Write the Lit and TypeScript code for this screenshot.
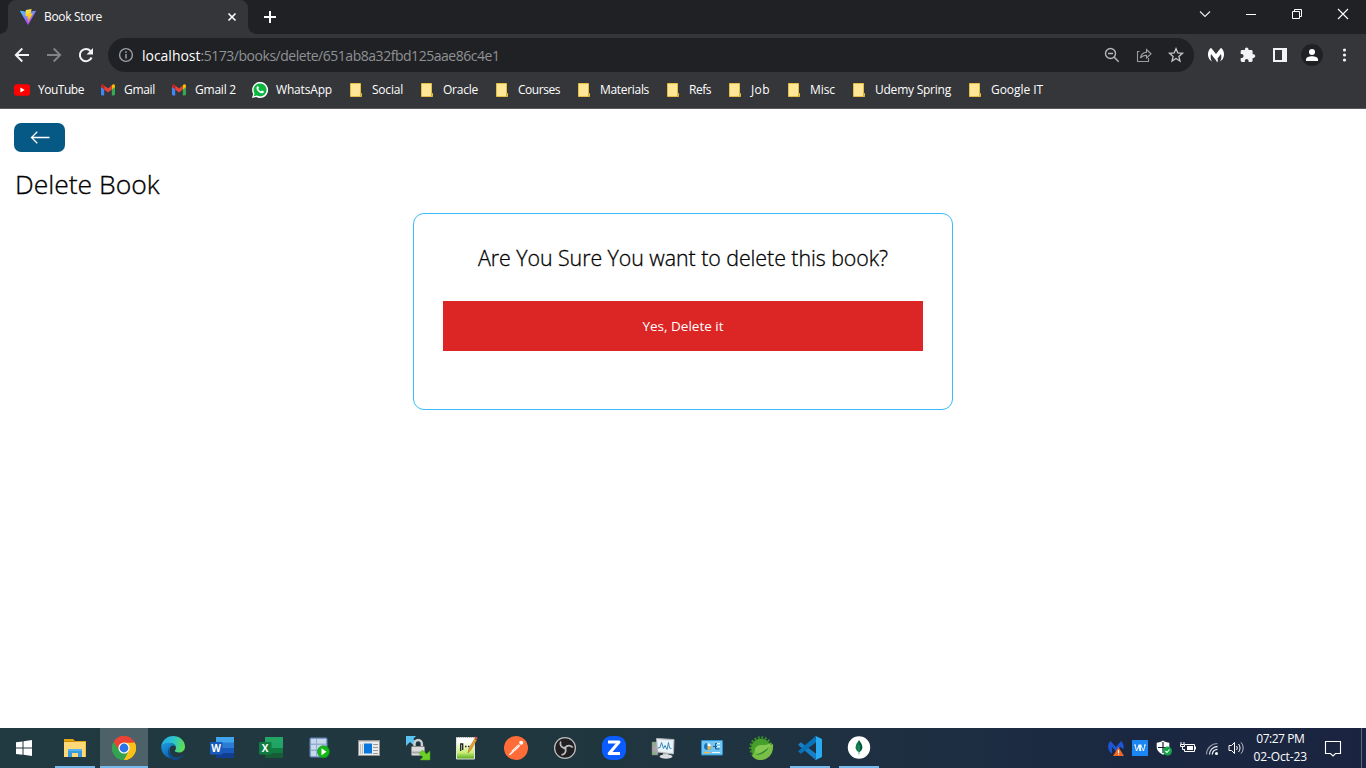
import { LitElement, html, svg, css } from "lit";
import { customElement, property } from "lit/decorators.js";
import { classMap } from "lit/directives/class-map.js";

/** A single line of text tracked so that it fills a given width. */
@customElement("fit-text")
class FitText extends LitElement {
  @property({ type: Number }) w = 0;
  @property() text = "";
  static styles = css`
    :host { display: block; flex: none; white-space: pre; }
    .line { display: inline-block; white-space: pre; }
  `;
  updated() {
    const el = this.renderRoot.querySelector(".line") as HTMLElement;
    el.style.letterSpacing = "0px";
    const natural = el.getBoundingClientRect().width;
    el.style.letterSpacing = `${(this.w - natural) / this.text.length}px`;
  }
  render() {
    return html`<span class="line">${this.text}</span>`;
  }
}

const fit = (text: string, w: number) => html`<fit-text style="width:${w}px" .w=${w} .text=${text}></fit-text>`;

const icon = (w: number, h: number, body: unknown, vb = `0 0 ${w} ${h}`) =>
  html`<svg width=${w} height=${h} viewBox=${vb} fill="none">${body}</svg>`;

const vite = svg`
  <defs>
    <linearGradient id="va" x1="0" y1="0" x2=".6" y2="1"><stop stop-color="#41d1ff"/><stop offset="1" stop-color="#bd34fe"/></linearGradient>
    <linearGradient id="vb" x1=".4" y1="0" x2=".6" y2="1"><stop stop-color="#ffea83"/><stop offset=".2" stop-color="#ffdd35"/><stop offset="1" stop-color="#ffa800"/></linearGradient>
  </defs>
  <path fill="url(#va)" d="M15.9 2.3 8.4 15.6a.4.4 0 0 1-.7 0L.1 2.3c-.2-.3.1-.7.4-.6L8 3l7.500-1.300c.3-.1.600.3.400.6Z"/>
  <path fill="url(#vb)" d="M11.500 0 6 1.100c-.1 0-.2.1-.2.200l-.3 5.700c0 .2.1.3.3.2l1.500-.3c.2 0 .3.1.3.3l-.5 2.200c0 .2.1.3.3.2l1-.3c.1 0 .3.1.2.3L7.900 13c0 .3.300.4.400.2L12.600 4.700c.1-.2 0-.3-.2-.3l-1.600.3c-.200 0-.300-.100-.300-.300l1.100-4c0-.200-.100-.300-.100-.400Z"/>`;

const youtube = svg`<rect y="2.300" width="16" height="11.400" rx="2.800" fill="#f00"/><path d="m6.400 5.600 4.300 2.400-4.300 2.400Z" fill="#fff"/>`;
const gmail = svg`
  <path d="M1 4v8.300c0 .7.500 1.200 1.200 1.200H4.200V6.200Z" fill="#4285f4"/>
  <path d="M15 4v8.300c0 .7-.5 1.200-1.200 1.200H11.800V6.200Z" fill="#34a853"/>
  <path d="M11.800 3.500v4l3.200-2.400V3.900c0-1.300-1.500-2-2.500-1.200Z" fill="#fbbc04"/>
  <path d="M4.200 7.500v-4L8 6.400l3.800-2.900v4L8 10.400Z" fill="#ea4335"/>
  <path d="M1 3.900v1.200l3.200 2.400v-4l-.7-.8C2.500 1.900 1 2.600 1 3.900Z" fill="#c5221f"/>`;
const whatsapp = svg`
  <path d="M0 16 1.200 12A8 8 0 1 1 4.300 15Z" fill="#fff"/>
  <path d="m1.700 14.300.9-2.900A6.500 6.500 0 1 1 4.800 13.500Z" fill="#0bb540"/>
  <path d="M5.500 4.200c.6-.2.800 0 1 .6l.4 1c.1.400-.3.700-.6 1.100.7 1.300 1.500 2 2.700 2.500.5-.5.8-1 1.100-.9l1.600.8c.3.200.1 1-.2 1.400-.7.800-1.800.8-3.200.2C6.200 9.900 5 8.300 4.600 7c-.3-1 0-2.300.9-2.800Z" fill="#fff"/>`;
const folder = svg`<path d="M2.500 1.500h10v10h1v3h-11Z" fill="#ffe797" stroke="#e3bd46"/><path d="M12.500 11v3.500" stroke="#d6ad37"/>`;

const bookmarks: [string, number, unknown][] = [
  ["YouTube", 46, youtube], ["Gmail", 31, gmail], ["Gmail 2", 41, gmail], ["WhatsApp", 56, whatsapp],
  ["Social", 31, folder], ["Oracle", 35, folder], ["Courses", 42, folder], ["Materials", 49, folder],
  ["Refs", 22, folder], ["Job", 19, folder], ["Misc", 25, folder], ["Udemy Spring", 76, folder], ["Google IT", 52, folder],
];

const explorer = svg`
  <path d="M1 3h9l2 2h11v16H1Z" fill="#e5a50c"/><path d="M1 6h21.500v15H1Z" fill="#ffd978"/><path d="M1 5h10l2 1H1Z" fill="#c98a06"/>
  <path d="M5 13h14v8h-4v-4H9v4H5Z" fill="#3a9ae0"/><path d="M5 13h14v2H5Z" fill="#54b2f1"/>`;
const chrome = svg`
  <path d="M12 12 1.600 6A12 12 0 0 1 22.400 6Z" fill="#ea4335"/>
  <path d="M12 12 22.400 6A12 12 0 0 1 12 24Z" fill="#fbc116"/>
  <path d="M12 12V24A12 12 0 0 1 1.600 6Z" fill="#34a350"/>
  <path d="M12 6.500H22.650A12 12 0 0 1 12 24L16.800 14.800Z" fill="#fbc116"/>
  <path d="M1.600 6 7.200 14.800 12 12V6.500H22.600A12 12 0 0 0 1.600 6Z" fill="#ea4335"/>
  <path d="M1.600 6 7.200 14.800A5.500 5.500 0 0 0 16.800 14.800L12 24A12 12 0 0 1 1.600 6Z" fill="#34a350"/>
  <circle cx="12" cy="12" r="5.600" fill="#fff"/><circle cx="12" cy="12" r="4.400" fill="#2a75e9"/>`;
const edge = svg`
  <defs>
    <linearGradient id="ea" x1="0" y1=".3" x2="1" y2=".5"><stop stop-color="#26a9e6"/><stop offset=".5" stop-color="#2cc6cd"/><stop offset="1" stop-color="#62df4b"/></linearGradient>
    <linearGradient id="eb" x1="0" y1="0" x2=".6" y2="1"><stop stop-color="#1b9fe2"/><stop offset="1" stop-color="#0c59a4"/></linearGradient>
  </defs>
  <path d="M.2 10.500C1 4.500 6 0 12 0c7 0 12 5 12 10.500 0 4-3 6-6 6-2.500 0-4.300-.8-4.300-1.700 0-.6 1.300-1 1.300-2.900 0-3-3-4.900-6.200-4.900-4 0-7 1.500-8.600 3.500Z" fill="url(#ea)"/>
  <path d="M.2 10.500C1.800 8 5 6.500 8.800 6.800c3.500.200 6 2.200 6.200 4.700-.5-1.400-2-2.500-3.700-1.900-2 .6-3 2.800-2.700 5.400.600 4.700 4.700 7.800 9.100 6.500A12 12 0 0 1 .2 10.500Z" fill="url(#eb)"/>
  <path d="M9.700 10.600C7 13 7.800 18.500 11.900 20.800c3 1.600 6.700.7 9.800-1.800.7-.5 1 .1.600.6A12 12 0 0 1 13 24C7.500 23 4.500 14.500 9.700 10.600Z" fill="#114a8b"/>`;
const office = (letter: string, tones: string[]) => svg`
  <rect x="6" y="1" width="18" height="6" fill=${tones[0]}/><rect x="6" y="6.500" width="18" height="5.500" fill=${tones[1]}/>
  <rect x="6" y="12" width="18" height="5" fill=${tones[2]}/><rect x="6" y="17" width="18" height="5" fill=${tones[3]}/>
  <rect y="6" width="12.500" height="12.500" rx=".8" fill=${tones[4]}/>
  <text x="6.200" y="15.800" text-anchor="middle" font-family="Open Sans, sans-serif" font-weight="700" font-size="10" fill="#fff">${letter}</text>`;
const server = svg`
  <rect x="2" y="2" width="17" height="19" rx="1" fill="#93aed1" stroke="#6488b8"/>
  <g fill="#c7d7ec"><path d="M3 3h5v4.500H3zM9 3h9v4.500H9zM3 9h5v4.500H3zM9 9h9v4.500H9zM3 15h5v5H3zM9 15h9v5H9z"/></g>
  <circle cx="15.500" cy="15.700" r="6" fill="#14b817" stroke="#0b8e10" stroke-width=".7"/><path d="m13.500 12.200 5 3.500-5 3.500Z" fill="#fff"/>`;
const win = svg`
  <rect x="1.500" y="4.500" width="21" height="15" fill="#ececec" stroke="#929292"/><path d="M2 5.500h20" stroke="#c7c7c7"/>
  <rect x="7" y="7.500" width="8" height="10" fill="#0878df"/><path d="M3.500 8v10M5.500 8v10" stroke="#bdbdbd"/>
  <path d="M16 8.500h5M16 11.500h5M16 14.500h5M16 17.500h5" stroke="#999"/>`;
const lock = svg`
  <path d="M0 0h10L7.300 3l3 3-3 3-3.300-3-4 4Z" fill="#5ac3ef"/>
  <path d="M8.500 12V8a3.700 4 0 0 1 7.400 0v4" stroke="#cfcfcf" stroke-width="2.400"/>
  <rect x="5.500" y="10.500" width="13" height="9" rx="1" fill="#dcdcdc" stroke="#8d8d8d"/><path d="M6 16.500h12" stroke="#a6a6a6" stroke-width="2"/>
  <path d="M24 24H14l3-3-4-3.500 3.500-3.500 4 4 3.500-3Z" fill="#6bd126" stroke="#4aa015" stroke-width=".5"/>`;
const notepad = svg`
  <defs><linearGradient id="np" x1="0" y1="0" x2="0" y2="1"><stop offset=".2" stop-color="#fff"/><stop offset=".7" stop-color="#c8ef77"/><stop offset="1" stop-color="#53a91c"/></linearGradient></defs>
  <path d="M1.500 1.500H19.500V23H1.500Z" fill="url(#np)" stroke="#e0e3dc"/><path d="M2 1.500h17" stroke="#aaa" stroke-dasharray="1 1"/>
  <path d="M5.700 15V8h2v6M10 10.500h1.500m1.500 0h1.500" stroke="#222" stroke-width="1.300"/>
  <path d="m13 17 .8-4L19.500 3l2 1.200-6 10.300Z" fill="#e9a433" stroke="#b26f1c" stroke-width=".6"/><path d="m19.500 2.500 1.200-2 2 1.200-1.100 2Z" fill="#e1584d"/>`;
const postman = svg`
  <circle cx="12" cy="12" r="12" fill="#ff6c37"/><path d="m10 12.500 4.500-4.200 1.800 1.500-4.800 4.700-2.500 1-1.500-.5Z" fill="#fff"/><circle cx="17.200" cy="6.800" r="2" fill="#fff"/>
  <path d="m5 19 4.500-5M6.300 18.700l4-3.700" stroke="#fff" stroke-width="1"/><path d="m9.500 14.500 5.500-5.500" stroke="#f6a183" stroke-width=".6"/>`;
const obs = svg`
  <circle cx="12" cy="12" r="10.400" fill="#211f22" stroke="#bababc" stroke-width="1.300"/>
  <g stroke="#bebebe" stroke-width="1.700"><path d="M11.500 12.200C8 11.500 6.500 8.500 7.800 5.500"/><path d="M11.500 12.200C8 11.500 6.500 8.500 7.800 5.500" transform="rotate(120 12 12)"/><path d="M11.500 12.200C8 11.500 6.500 8.500 7.800 5.500" transform="rotate(240 12 12)"/></g><circle cx="12" cy="12" r="1.500" fill="#bbb"/>`;
const zbox = svg`<rect width="24" height="24" rx="9" fill="#0b5cff"/><path d="M6 6h11L7.200 17.500H18" stroke="#fff" stroke-width="3" stroke-linejoin="round"/>`;
const monitor = svg`
  <path d="M1 6h6v13H1Z" fill="#a5a5a5" stroke="#777" stroke-width=".6"/><path d="M2 8h3M2 17h3" stroke="#5c5"/>
  <path d="M12 16h5v4h-5z" fill="#aaa"/><ellipse cx="15" cy="20.500" rx="6.500" ry="2.200" fill="#d9dde0"/>
  <path d="m5.500 2.500 17.500 1-.5 14.500-16-2Z" fill="#e8edf0" stroke="#aeb5b9"/><path d="m7 4.500 14.500 1-.5 10.500-13.500-1.700Z" fill="#e9f5fc"/>
  <path d="m7 12 2-.5 1.500-5 2 6 1.500-3 2 4 1.500-7 1 5.500 2 .5" stroke="#3c88b5"/>`;
const panel = svg`
  <rect x="1.500" y="4.500" width="21" height="14.500" rx=".5" fill="#71c6f4" stroke="#2d91cf"/><circle cx="7.500" cy="10.500" r="3.500" fill="#1476bd"/>
  <path d="M7.500 10.500V7a3.500 3.500 0 0 1 3.500 3.500Z" fill="#fff"/><path d="M7.500 10.500H11A3.500 3.500 0 0 1 7.500 14Z" fill="#ffaf32"/>
  <path d="M13 10.500h2.500M15.500 13V7.500h4M15.500 10.500h4M15.500 13h4" stroke="#205c87"/><path d="M17 7h3v1.300h-3zM17 10h3v1.300h-3z" fill="#eaf8ff"/><path d="M4 16.500h6" stroke="#ffb43e" stroke-width="1.200"/><path d="M12 16.500h8" stroke="#eef8fc"/>`;
const spring = svg`
  <circle cx="12" cy="12.500" r="10" fill="#459f2b"/><circle cx="12" cy="12" r="10.700" stroke="#3b9127" stroke-width="2.200" stroke-dasharray="2 1.600"/>
  <path d="M24 8c1 10-5 16-13 16-4 0-6-2-8-4 2-1 3-9 8-10 5-.6 9-.4 13-2Z" fill="#78bd45"/>
  <path d="M21.500 7c.5 7-4 11-10 10.500-2.300-.2-4.500-.5-5.500-2C5 11 9 9 13 9c3.500 0 6-.2 8.500-2Z" fill="#85c850"/><path d="M6 19c7 0 12-3 14-8-3 3-6 5-14 8Z" fill="#2c8b2f"/>`;
const vscode = svg`
  <path d="m.8 8 2-1.700L18.500 18l-1 5.700L.5 9.300C0 8.900.2 8.500.8 8Z" fill="#167fc5"/>
  <path d="m.8 16 2 1.700L18.500 6l-1-5.700L.5 14.700c-.5.400-.3.800.3 1.300Z" fill="#0873b9"/>
  <path d="M17.800 0 24 3v18l-6.200 3c-.5.100-.9 0-1.300-.4.800.3 1.500-.2 1.500-1.100v-21c0-.9-.7-1.400-1.500-1.100.4-.4.8-.5 1.300-.4Z" fill="#2aaaf0"/>`;
const mongo = svg`<circle cx="12" cy="11.500" r="11.200" fill="#fff"/><path d="M12 4c-2 2.500-3.500 5-3.400 7.500.1 2.200 1.700 4 3.400 5Z" fill="#087a4c"/><path d="M12 4c2 2.500 3.500 5 3.400 7.500-.1 2.200-1.700 4-3.400 5Z" fill="#035c42"/><path d="M12 9v9.500" stroke="#42a875" stroke-width=".8"/>`;

const word = office("W", ["#41a5ee", "#2b7cd3", "#185abd", "#103f91", "#185abd"]);
const excel = office("X", ["#23a566", "#21a366", "#107c41", "#185c37", "#107c41"]);

const tasks: { art: unknown; state?: string }[] = [
  { art: explorer, state: "open" }, { art: chrome, state: "active" }, { art: edge }, { art: word }, { art: excel },
  { art: server }, { art: win }, { art: lock }, { art: notepad }, { art: postman }, { art: obs }, { art: zbox },
  { art: monitor }, { art: panel }, { art: spring }, { art: vscode, state: "open" }, { art: mongo, state: "open" },
];

@customElement("app-root")
class AppRoot extends LitElement {
  static styles = css`
    :host { display: flex; flex-direction: column; width: 1366px; height: 768px; overflow: hidden; background: #fff; font-family: "Open Sans", "Noto Sans", sans-serif; font-size: 12px; line-height: 16px; }
    * { box-sizing: border-box; }
    svg { display: block; flex: none; overflow: visible; }

    .strip { display: flex; height: 34px; background: #202124; color: #fff; flex: none; }
    .tab { display: flex; align-items: center; width: 240px; height: 34px; padding: 0 12px; background: #35363a; border-radius: 8px 8px 0 0; }
    .tab fit-text { margin: 0 auto 0 8px; }
    .flare { width: 8px; height: 34px; background: radial-gradient(circle at 8px 0, transparent 7.5px, #35363a 8px) no-repeat 0 26px / 8px 8px; }
    .flare.left { background: radial-gradient(circle at 0 0, transparent 7.5px, #35363a 8px) no-repeat 0 26px / 8px 8px; }
    .plus { padding: 11px 0 0 8px; }
    .winbtns { display: flex; margin-left: auto; padding-right: 17px; gap: 34px; align-items: center; height: 28px; }

    .toolbar { display: flex; align-items: center; height: 38px; flex: none; background: #35363a; padding: 4px 14px 0 14px; }
    .nav { display: flex; gap: 16px; width: 94px; }
    .omnibox { display: flex; align-items: center; width: 1086px; height: 34px; border-radius: 17px; background: #202124; padding: 0 10px; font-size: 14px; line-height: 20px; }
    .host { color: #fff; margin: 1px 0 0 8px; }
    .url { color: #8f9194; margin-top: 1px; }
    .actions { display: flex; gap: 16px; margin-left: auto; }
    .exts { display: flex; gap: 16px; margin-left: 14px; align-items: center; }
    .avatar { display: grid; place-items: center; width: 22px; height: 22px; margin: 0 -3px; border-radius: 50%; background: #202124; }

    .bookmarks { display: flex; align-items: center; gap: 16px; height: 37px; flex: none; padding: 0 14px; background: #35363a; border-bottom: 1px solid #5c5759; color: #fff; }
    .bm { display: flex; align-items: center; gap: 8px; }

    .page { flex: 1; display: flex; flex-direction: column; padding: 14px 14px 0; color: #000; }
    .back { display: grid; place-items: center; width: 51px; height: 29px; padding-bottom: 1px; border-radius: 7px; background: #075985; }
    .title { font-size: 26.5px; line-height: 32px; font-weight: 300; -webkit-text-stroke: .35px #000; margin: 16px 0 13px 1px; }
    .card { display: flex; flex-direction: column; align-items: center; align-self: center; width: 540px; height: 197px; border: 1px solid #38bdf8; border-radius: 11px; padding: 28px 29px 0; }
    .ask { font-size: 21.4px; line-height: 32px; font-weight: 300; -webkit-text-stroke: .3px #000; }
    .confirm { display: grid; place-items: center; width: 480px; height: 50px; margin-top: 27px; background: #dc2626; color: #fff; font-size: 13.5px; line-height: 20px; }

    .taskbar { display: flex; height: 40px; flex: none; background: linear-gradient(90deg, #213940, #20363f 45%, #1e3042 63%, #1b2841 82%, #1a2440); color: #fff; }
    .start { width: 51px; padding: 12px 0 0 16px; }
    .apps { display: flex; gap: 1px; }
    .task { display: flex; flex-direction: column; align-items: center; justify-content: space-between; width: 48px; height: 40px; padding-top: 8px; }
    .task.active { background: #4c6168; }
    .bar { width: 40px; height: 2px; }
    .open .bar, .active .bar { background: #76b9ed; }
    .active .bar { width: 48px; }
    .tray { display: flex; align-items: center; margin-left: auto; gap: 8px; }
    .clock { display: flex; flex-direction: column; align-items: center; line-height: 18px; margin: 0 9px 1px -1px; }
    .desk { width: 5px; height: 40px; border-left: 1px solid #5d657a; margin-left: 11px; }
  `;

  render() {
    return html`
      <div class="strip">
        <div class="flare left"></div>
        <div class="tab">${icon(16, 16, vite)}${fit("Book Store", 58)}
          ${icon(8, 8, svg`<path d="m.5.5 7 7m0-7-7 7" stroke="#fff" stroke-width="1.600"/>`)}</div>
        <div class="flare"></div>
        <div class="plus">${icon(12, 12, svg`<path d="M6 0v12M0 6h12" stroke="#fff" stroke-width="2"/>`)}</div>
        <div class="winbtns">
          ${icon(12, 12, svg`<path d="m1 3.500 5 5 5-5" stroke="#eee" stroke-width="1.100"/>`)}
          ${icon(12, 12, svg`<path d="M1 6.500h10" stroke="#fff"/>`)}
          ${icon(12, 12, svg`<path d="M1.500 3.500h7v7h-7zM3.500 3.500v-2h7v7h-2" stroke="#fff"/>`)}
          ${icon(12, 12, svg`<path d="m1 1 10 10m0-10L1 11" stroke="#fff" stroke-width="1.100"/>`)}
        </div>
      </div>
      <div class="toolbar">
        <div class="nav">
          ${icon(16, 16, svg`<path d="M15 8H2.500M8.300 1.500 1.800 8l6.500 6.500" stroke="#f2f3f4" stroke-width="1.900"/>`)}
          ${icon(16, 16, svg`<path d="M1 8h12.500M7.700 1.500 14.200 8l-6.500 6.500" stroke="#828387" stroke-width="1.900"/>`)}
          ${icon(16, 16, svg`<path d="M13.600 10.500A6.100 6.100 0 1 1 12.500 4" stroke="#f2f3f4" stroke-width="2"/><path d="M15 1v6.500H8.500Z" fill="#f2f3f4"/>`)}
        </div>
        <div class="omnibox">
          ${icon(16, 16, svg`<circle cx="8" cy="8" r="6.400" stroke="#9aa0a6" stroke-width="1.400"/><path d="M8 7v4.500M8 4.300v1.600" stroke="#9aa0a6" stroke-width="1.500"/>`)}
          <span class="host">${fit("localhost", 58.5)}</span><span class="url">${fit(":5173/books/delete/651ab8a32fbd125aae86c4e1", 299)}</span>
          <div class="actions">
            ${icon(16, 16, svg`<circle cx="6.500" cy="6.500" r="5" stroke="#b4b6b8" stroke-width="1.400"/><path d="m10.200 10.200 4.500 4.500M4 6.500h5" stroke="#b4b6b8" stroke-width="1.500"/>`)}
            ${icon(16, 16, svg`<path d="M3.500 4.500h-2v10h11V11" stroke="#999b9d" stroke-width="1.100"/><path d="M4.500 11C5 7.500 7 5.500 10.500 5.300V2.500l4.500 4.300-4.500 4.200V8.200C8 8.200 6 9 4.500 11Z" stroke="#a2a4a6" stroke-width="1.100"/>`)}
            ${icon(16, 16, svg`<path d="m8 1.600 1.800 4.300 4.700.4-3.600 3.100 1.100 4.600L8 11.500 4 14l1.100-4.600-3.600-3.100 4.700-.4Z" stroke="#c3c5c7" stroke-width="1.300"/>`)}
          </div>
        </div>
        <div class="exts">
          ${icon(16, 16, svg`<path d="M3 .7 8 7l5-6.300c2.200 2 3.200 4.500 3 7.300-.2 3-1.700 5.200-4 6.500 1.500-2.200 1.700-4.600 1-7.500L9.500 11.500c.6 1.200.5 2.800-.4 4-.4-1.400-1.300-2.500-2.600-4L3 7c-.700 2.900-.500 5.300 1 7.500C1.700 13.200.2 11 0 8-.200 5.200.8 2.700 3 .7Z" fill="#fff"/>`)}
          ${icon(16, 16, svg`<path d="M13.500 7.300h-.9V4.500c0-.8-.6-1.400-1.400-1.400H8.500v-.9a1.800 1.800 0 0 0-3.600 0v.9H2.100C1.300 3.100.7 3.700.7 4.500v2.600h1a1.900 1.900 0 0 1 0 3.800h-1v2.700c0 .8.600 1.400 1.400 1.400h2.700v-1a1.900 1.900 0 0 1 3.800 0v1h2.600c.8 0 1.400-.6 1.400-1.400v-2.700h.9a1.800 1.800 0 0 0 0-3.600Z" fill="#f1f3f4"/>`)}
          ${icon(16, 16, svg`<path d="M2 2h12v12H2z" stroke="#f1f3f4" stroke-width="2"/><path d="M10 2h5v12h-5z" fill="#f1f3f4"/>`)}
          <div class="avatar">${icon(14, 14, svg`<circle cx="7" cy="4" r="3" fill="#fff"/><path d="M1 13v-1.500C1 9.200 4 8.200 7 8.200s6 1 6 3.300V13Z" fill="#fff"/>`)}</div>
          ${icon(16, 16, svg`<g fill="#f1f3f4"><circle cx="8.500" cy="3" r="1.600"/><circle cx="8.500" cy="8" r="1.600"/><circle cx="8.500" cy="13" r="1.600"/></g>`)}
        </div>
      </div>
      <div class="bookmarks">${bookmarks.map(([t, w, a]) => html`<div class="bm">${icon(16, 16, a)}${fit(t, w)}</div>`)}</div>

      <div class="page">
        <div class="back">${icon(22, 14, svg`<path d="M20.500 7.500h-18M8.300 1.700 2.500 7.500l5.800 5.800" stroke="#fff" stroke-width="1.300"/>`)}</div>
        <div class="title">${fit("Delete Book", 144.5)}</div>
        <div class="card">
          <div class="ask">${fit("Are You Sure You want to delete this book?", 410)}</div>
          <div class="confirm">${fit("Yes, Delete it", 81)}</div>
        </div>
      </div>

      <div class="taskbar">
        <div class="start">${icon(16, 16, svg`<path d="M0 2.300 6.500 1.400v6.200H0ZM7.500 1.200 16 0v7.600H7.500ZM0 8.600h6.500v6.200L0 13.900ZM7.500 8.600H16V16l-8.500-1.200Z" fill="#fff"/>`)}</div>
        <div class="apps">${tasks.map(({ art, state }) => html`
          <div class=${classMap({ task: true, open: state === "open", active: state === "active" })}>${icon(24, 24, art)}<div class="bar"></div></div>`)}</div>
        <div class="tray">
          ${icon(16, 16, svg`<path d="M2.500 1 8 7l5-6c2.500 2 3 5 2.600 8L12 7l-4 4.500L4 7v6.500C0 11-1.500 5 2.500 1Z" fill="#1d55d2"/><path d="m10.500 7 5.500 9H5Z" fill="#f26522"/><path d="M10.500 10v3m0 .8v1" stroke="#fff" stroke-width="1.200"/>`)}
          ${icon(16, 16, svg`<path d="M0 0h16v16H0z" fill="#1c86f4"/><path d="m3 5 1.500 6L7.300 5l1.500 6M7.300 5l1.500 6 0 0M8 8l.8 3M7.300 5 5.500 9M13 5l-1.500 6L8.700 5 7.200 11M2 5h2M12 5h2M6.500 5h3" stroke="#fff" stroke-width=".9"/>`)}
          ${icon(16, 16, svg`<path d="M7 .5C5 2 3 2.500.7 2.700V7c0 3.500 3 6 6.300 7.700 3.300-1.700 6.300-4.200 6.300-7.700V2.700C11 2.500 9 2 7 .5Z" fill="#fff"/><path d="M7 2v11M2 7.500h10" stroke="#172238" stroke-width="1.200"/><circle cx="11.500" cy="11" r="4.500" fill="#16a34a"/><path d="m9.500 11 1.500 1.500 2.500-3" stroke="#fff" stroke-width="1.100"/>`)}
          ${icon(16, 16, svg`<path d="M5 4.500h9.500v7H4.500V9" stroke="#fff"/><path d="M7 6h6v4H7zM15 6.500h1v3h-1z" fill="#fff"/><path d="M1 2v2M4 2v2M.5 4.500h4v2h-4zM2.500 6v3.500H4" stroke="#fff"/>`)}
          ${icon(17, 16, svg`<path d="M2.500 14.500A11 11 0 0 1 13.500 3.500" stroke="#8d96a5" stroke-width="1.200"/><path d="M5.500 14.500a8 8 0 0 1 8-8M8.300 14.500a5.200 5.200 0 0 1 5.200-5.200" stroke="#e4e7eb" stroke-width="1.300"/><circle cx="12.500" cy="13.500" r="1.500" fill="#fff"/>`)}
          ${icon(18, 16, svg`<g transform="translate(-1)"><path d="M1 5.500h2.500l3-3v11l-3-3H1Z" stroke="#fff"/><path d="M8.500 6a3 3 0 0 1 0 4M10.500 4a6 6 0 0 1 0 8" stroke="#fff"/><path d="M13 2.300a8.500 8.500 0 0 1 0 11.400" stroke="#b7bcc7"/></g>`)}
          <div class="clock">${fit("07:27 PM", 48)}${fit("02-Oct-23", 53.5)}</div>
          ${icon(18, 18, svg`<path d="M1.500 2.500h15v12h-5l-2.500 2.500-2.500-2.500h-5Z" stroke="#fff" stroke-width="1.100"/>`)}
          <div class="desk"></div>
        </div>
      </div>
    `;
  }
}
